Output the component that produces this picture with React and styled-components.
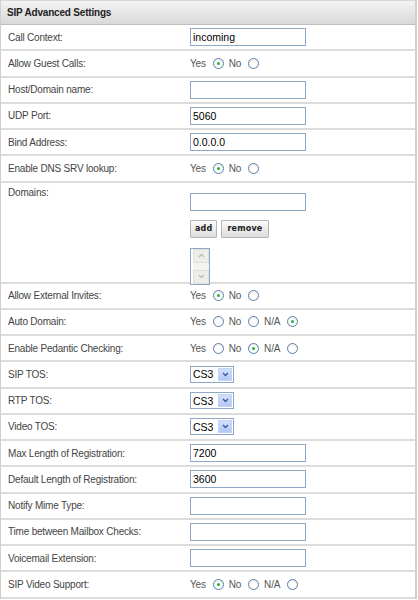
import React from "react";
import styled, { createGlobalStyle } from "styled-components";

const Global = createGlobalStyle`
  html, body { margin: 0; padding: 0; background: #fff; }
  body { font-family: "Liberation Sans", Arial, sans-serif; font-size: 10px; color: #333; }
`;

const Panel = styled.div`
  width: 414px;
  border-left: 1px solid #cfcfcf;
  border-right: 2px solid #cfcfcf;
  border-top: 1px solid #d8d8d8;
  background: #fff;
`;

const Header = styled.div`
  height: 23px;
  display: flex;
  align-items: center;
  padding-left: 6px;
  font-weight: bold;
  font-size: 10px;
  color: #222;
  letter-spacing: -0.2px;
  background: linear-gradient(#f3f3f3, #d9d9d9);
  border-bottom: 1px solid #bdbdbd;
`;

const Row = styled.div`
  display: flex;
  align-items: ${(p) => (p.$tall ? "flex-start" : "center")};
  height: ${(p) => (p.$tall ? "99px" : "24.25px")};
  border-bottom: 2px solid #dcdcdc;
`;

const Label = styled.div`
  width: 189px;
  flex: none;
  padding-left: 7px;
  box-sizing: border-box;
  color: #444;
  letter-spacing: -0.2px;
  padding-top: ${(p) => (p.$top ? "4px" : "0")};
`;

const Value = styled.div`
  display: flex;
  align-items: center;
  color: #444;
`;

const Stack = styled.div`
  display: flex;
  flex-direction: column;
  align-items: flex-start;
  padding-top: 10px;
`;

const TextInput = styled.input`
  width: 116px;
  height: 18px;
  box-sizing: border-box;
  border: 1px solid #8ea7c4;
  padding: 1px 2px;
  font-family: "Liberation Sans", Arial, sans-serif;
  font-size: 10.5px;
  color: #000;
  outline: none;
`;

const Txt = styled.span`
  letter-spacing: -0.2px;
  color: #555;
`;

const RadioDot = styled.span`
  display: inline-block;
  width: 11px;
  height: 11px;
  box-sizing: border-box;
  border-radius: 50%;
  border: 1px solid #5a7fa8;
  background: radial-gradient(circle at 50% 60%, #fff 40%, #e4e4e4 100%);
  margin: 0 5px 0 7px;
  position: relative;
  &::after {
    content: "";
    display: ${(p) => (p.$on ? "block" : "none")};
    position: absolute;
    left: 3px;
    top: 3px;
    width: 3px;
    height: 3px;
    border-radius: 50%;
    background: #22b03a;
  }
`;

const Select = styled.div`
  display: flex;
  align-items: stretch;
  width: 44px;
  height: 17px;
  box-sizing: border-box;
  border: 1px solid #8ea7c4;
  background: #fff;
`;

const SelectText = styled.span`
  flex: 1;
  padding-left: 2px;
  font-size: 10.5px;
  color: #000;
  display: flex;
  align-items: center;
`;

const SelectBtn = styled.span`
  width: 14px;
  margin: 1px;
  background: linear-gradient(#d3e0fb, #b4c8f5);
  border: 1px solid #c2d2f4;
  box-sizing: border-box;
  display: flex;
  align-items: center;
  justify-content: center;
`;

const Buttons = styled.div`
  display: flex;
  gap: 4px;
  margin-top: 9px;
`;

const Btn = styled.button`
  height: 18px;
  padding: 0 ${(p) => p.$pad || 5}px;
  font-family: "DejaVu Sans", Verdana, sans-serif;
  font-weight: bold;
  font-size: 8px;
  letter-spacing: 0.2px;
  color: #222;
  border: 1px solid #b5b5b5;
  background: linear-gradient(#fafafa, #dcdcdc);
  border-radius: 1px;
`;

const ListBox = styled.div`
  margin-top: 10px;
  width: 20px;
  height: 37px;
  box-sizing: border-box;
  border: 1px solid #8ea7c4;
  display: flex;
  justify-content: flex-end;
  background: #fff;
`;

const ScrollBar = styled.div`
  width: 16px;
  display: flex;
  flex-direction: column;
  justify-content: space-between;
  background: #f4f4f0;
`;

const ScrollArrow = styled.div`
  height: 12px;
  display: flex;
  align-items: center;
  justify-content: center;
  background: #eeeee9;
  border: 1px solid #e0e0da;
`;

const Chevron = ({ up, color = "#9aa", w = 7 }) => (
  <svg width={w} height="5" viewBox="0 0 7 5">
    <path
      d={up ? "M1 4 L3.5 1.5 L6 4" : "M1 1 L3.5 3.5 L6 1"}
      fill="none"
      stroke={color}
      strokeWidth="1.4"
    />
  </svg>
);

const Radios = ({ opts, sel }) => (
  <Value>
    {opts.map((o, i) => (
      <React.Fragment key={o}>
        <Txt>{o}</Txt>
        <RadioDot $on={i === sel} />
      </React.Fragment>
    ))}
  </Value>
);

const Sel = () => (
  <Select>
    <SelectText>CS3</SelectText>
    <SelectBtn>
      <Chevron color="#3b57a0" />
    </SelectBtn>
  </Select>
);

const Inp = ({ v = "" }) => <TextInput defaultValue={v} />;

const rows = [
  ["Call Context:", <Inp v="incoming" />],
  ["Allow Guest Calls:", <Radios opts={["Yes", "No"]} sel={0} />],
  ["Host/Domain name:", <Inp />],
  ["UDP Port:", <Inp v="5060" />],
  ["Bind Address:", <Inp v="0.0.0.0" />],
  ["Enable DNS SRV lookup:", <Radios opts={["Yes", "No"]} sel={0} />],
  ["Domains:", null],
  ["Allow External Invites:", <Radios opts={["Yes", "No"]} sel={0} />],
  ["Auto Domain:", <Radios opts={["Yes", "No", "N/A"]} sel={2} />],
  ["Enable Pedantic Checking:", <Radios opts={["Yes", "No", "N/A"]} sel={1} />],
  ["SIP TOS:", <Sel />],
  ["RTP TOS:", <Sel />],
  ["Video TOS:", <Sel />],
  ["Max Length of Registration:", <Inp v="7200" />],
  ["Default Length of Registration:", <Inp v="3600" />],
  ["Notify Mime Type:", <Inp />],
  ["Time between Mailbox Checks:", <Inp />],
  ["Voicemail Extension:", <Inp />],
  ["SIP Video Support:", <Radios opts={["Yes", "No", "N/A"]} sel={0} />],
];

export default function App() {
  return (
    <>
      <Global />
      <Panel>
        <Header>SIP Advanced Settings</Header>
        {rows.map(([label, ctrl]) =>
          ctrl === null ? (
            <Row key={label} $tall>
              <Label $top>{label}</Label>
              <Stack>
                <Inp />
                <Buttons>
                  <Btn $pad={4}>add</Btn>
                  <Btn $pad={5}>remove</Btn>
                </Buttons>
                <ListBox>
                  <ScrollBar>
                    <ScrollArrow>
                      <Chevron up color="#bbb" />
                    </ScrollArrow>
                    <ScrollArrow>
                      <Chevron color="#bbb" />
                    </ScrollArrow>
                  </ScrollBar>
                </ListBox>
              </Stack>
            </Row>
          ) : (
            <Row key={label}>
              <Label>{label}</Label>
              <Value>{ctrl}</Value>
            </Row>
          )
        )}
      </Panel>
    </>
  );
}
